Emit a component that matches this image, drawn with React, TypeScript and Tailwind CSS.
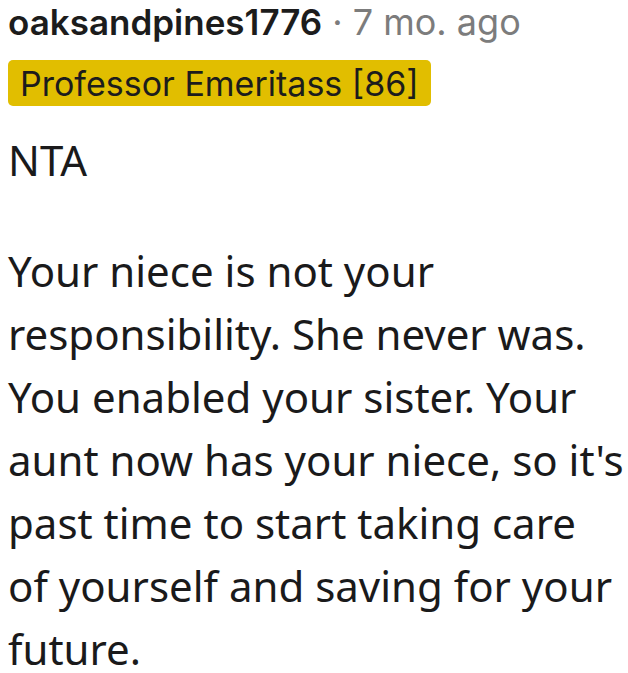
import React from "react";

const App: React.FC = () => {
  return (
    <div className="w-[628px] bg-white pl-2 text-[#1a1a1b]">
      {/* Header */}
      <div className="flex items-baseline leading-[44px] font-['Inter','Noto_Sans',sans-serif]">
        <span className="text-[35px] font-semibold text-[#1c1c1c]">oaksandpines1776</span>
        <span className="ml-[10px] text-[36px] text-[#7c7c7c]">· 7 mo. ago</span>
      </div>

      {/* Flair */}
      <div className="mt-[16px] inline-flex h-[46px] items-center rounded-[5px] bg-[#e1be00] px-3 text-[34px] font-['Inter','Noto_Sans',sans-serif] text-[#1c1c1c]">
        Professor Emeritass [86]
      </div>

      {/* Body */}
      <div className="mt-[22px] w-[616px] font-['Noto_Sans','Open_Sans',sans-serif] text-[42px] leading-[63px]">
        <p>NTA</p>
        <p className="mt-[48px]">
          Your niece is not your responsibility. She never was. You enabled your
          sister. Your aunt now has your niece, so it's past time to start taking
          care of yourself and saving for your future.
        </p>
      </div>
    </div>
  );
};

export default App;
